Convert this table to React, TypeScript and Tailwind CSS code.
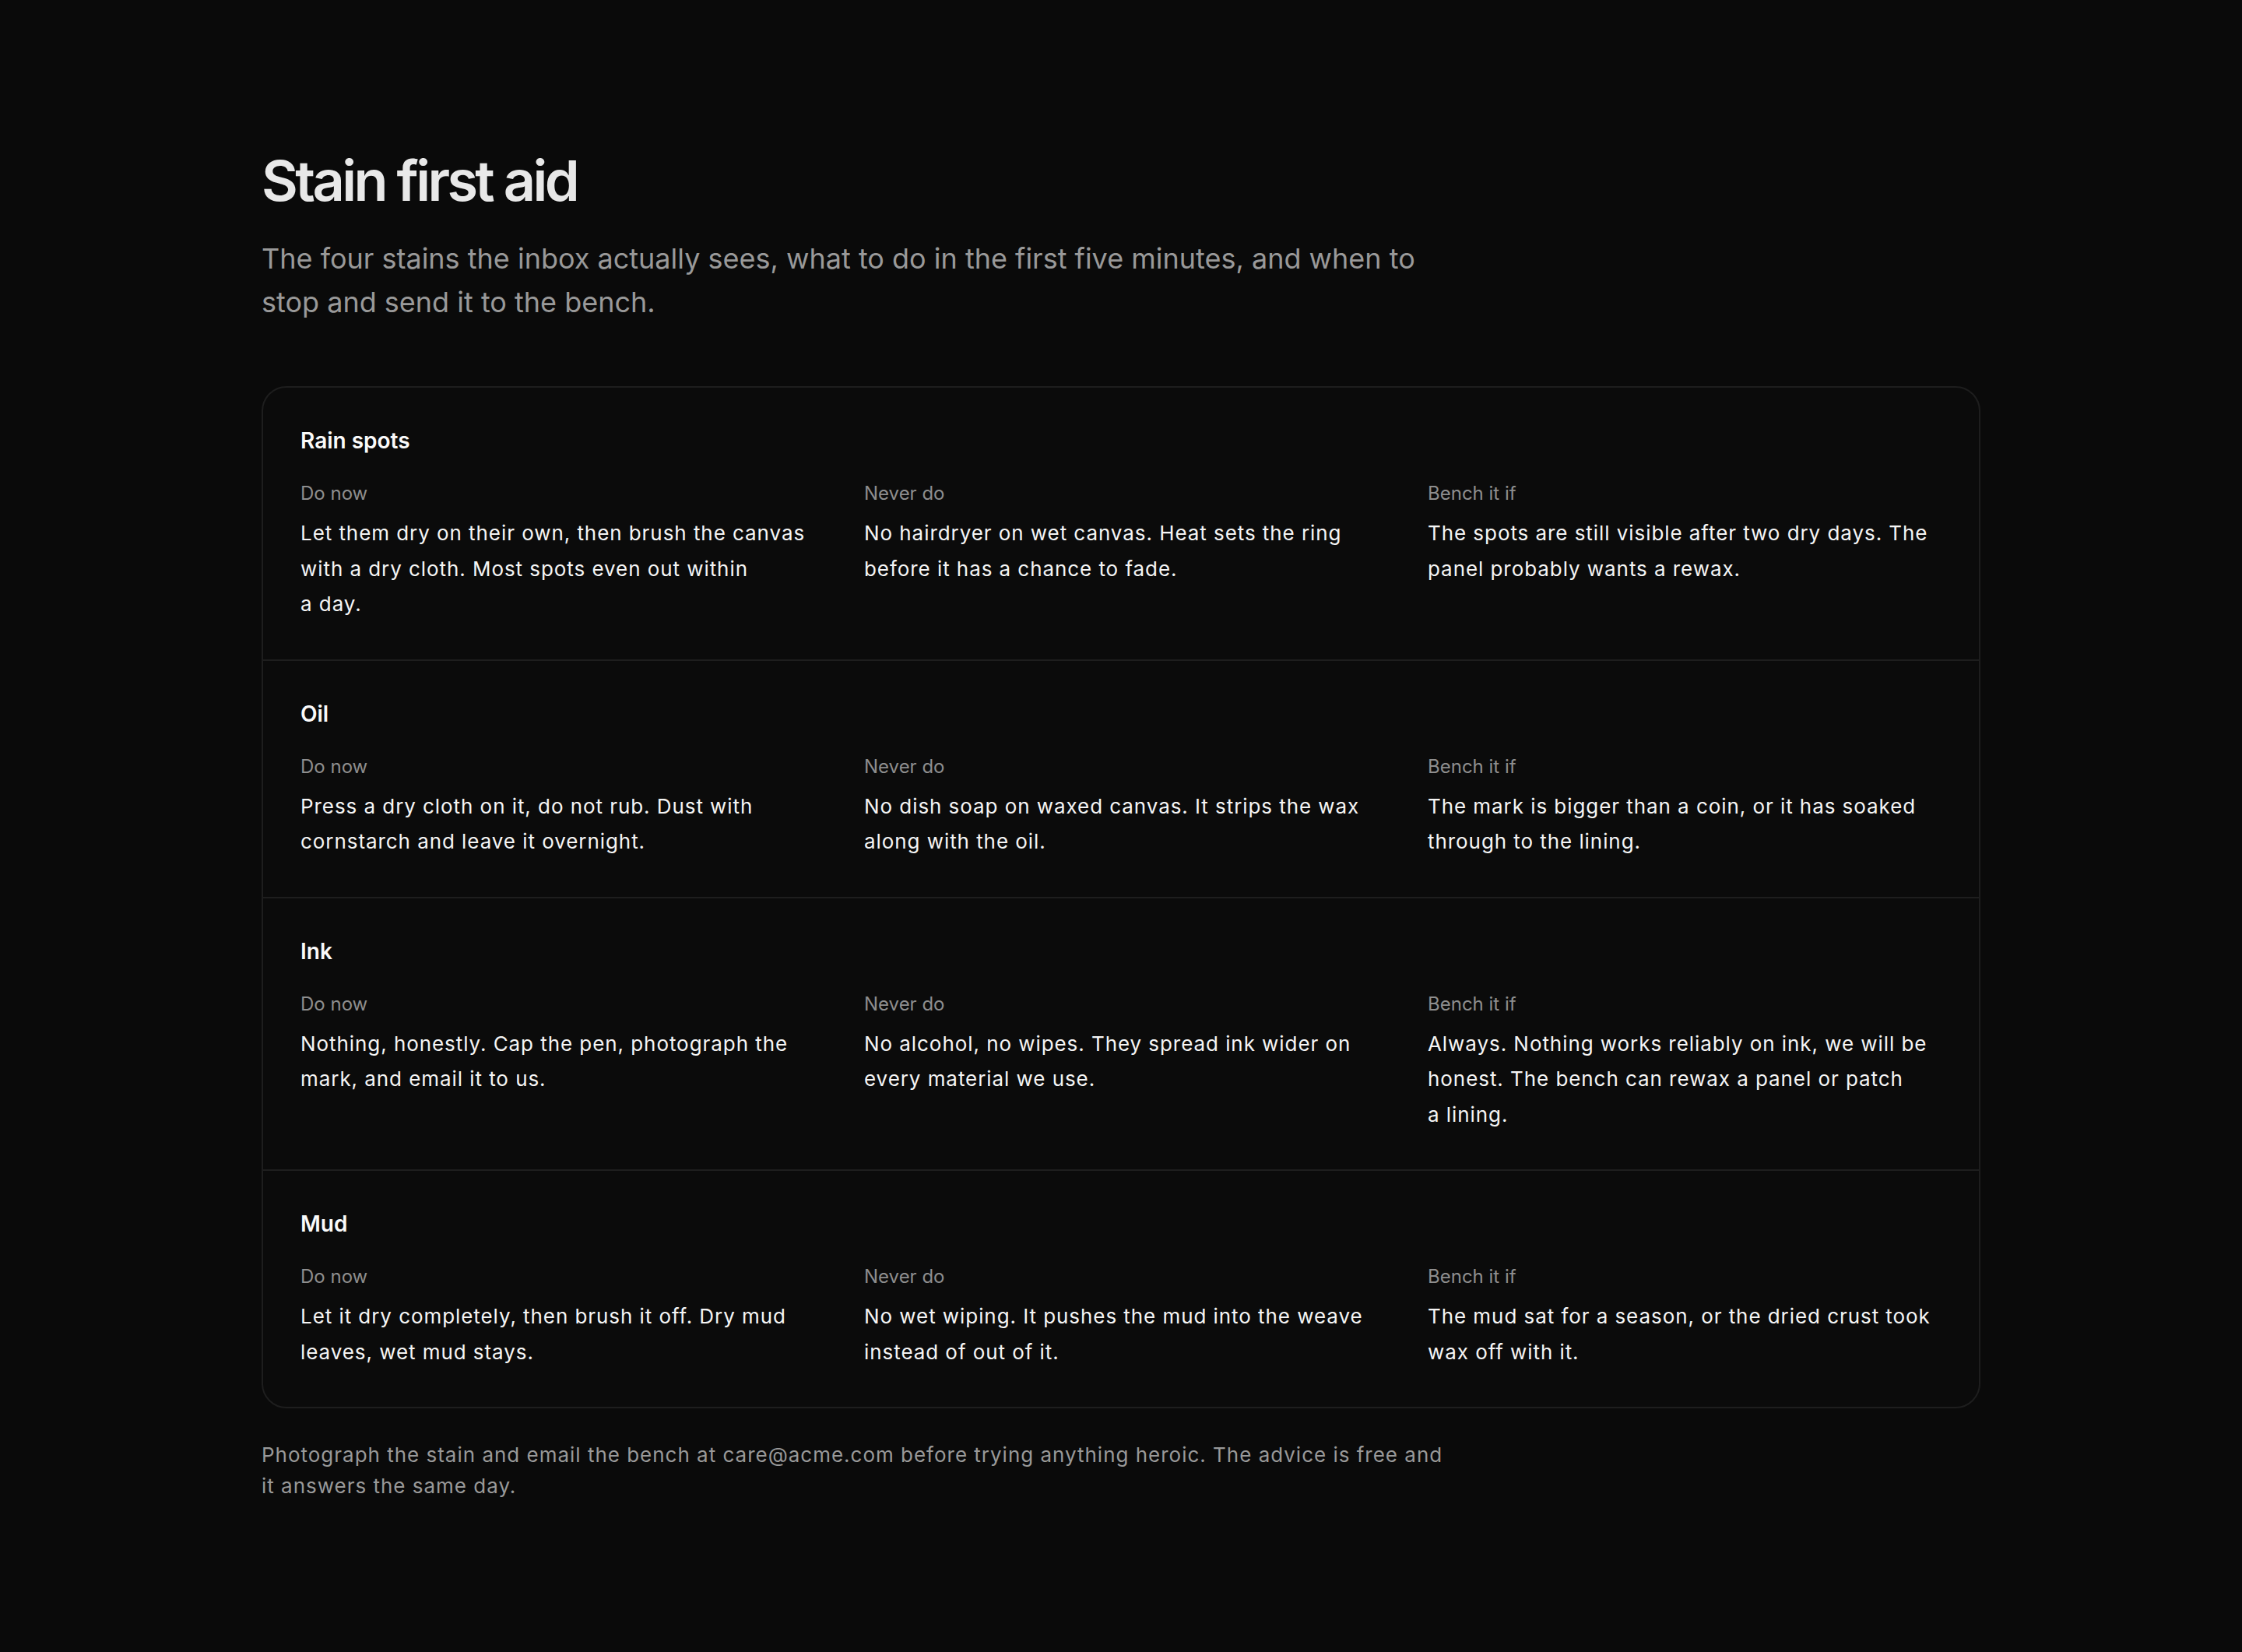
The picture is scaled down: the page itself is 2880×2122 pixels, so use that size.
import React from 'react';

type Stain = {
  name: string;
  doNow: string;
  neverDo: string;
  benchIf: string;
};

const stains: Stain[] = [
  {
    name: 'Rain spots',
    doNow: 'Let them dry on their own, then brush the canvas with a dry cloth. Most spots even out within a day.',
    neverDo: 'No hairdryer on wet canvas. Heat sets the ring before it has a chance to fade.',
    benchIf: 'The spots are still visible after two dry days. The panel probably wants a rewax.',
  },
  {
    name: 'Oil',
    doNow: 'Press a dry cloth on it, do not rub. Dust with cornstarch and leave it overnight.',
    neverDo: 'No dish soap on waxed canvas. It strips the wax along with the oil.',
    benchIf: 'The mark is bigger than a coin, or it has soaked through to the lining.',
  },
  {
    name: 'Ink',
    doNow: 'Nothing, honestly. Cap the pen, photograph the mark, and email it to us.',
    neverDo: 'No alcohol, no wipes. They spread ink wider on every material we use.',
    benchIf: 'Always. Nothing works reliably on ink, we will be honest. The bench can rewax a panel or patch a lining.',
  },
  {
    name: 'Mud',
    doNow: 'Let it dry completely, then brush it off. Dry mud leaves, wet mud stays.',
    neverDo: 'No wet wiping. It pushes the mud into the weave instead of out of it.',
    benchIf: 'The mud sat for a season, or the dried crust took wax off with it.',
  },
];

const Advice: React.FC<{ label: string; text: string }> = ({ label, text }) => (
  <div>
    <p className="text-[24px] leading-[32px] text-[#8e8e8e]">{label}</p>
    <p className="mt-[12px] text-[26px] leading-[45.5px] tracking-[0.036em] text-[#f5f5f5] text-pretty">{text}</p>
  </div>
);

export default function App() {
  return (
    <div className="min-h-screen bg-[#0a0a0a] font-['Inter',sans-serif] antialiased">
      <div className="mx-auto max-w-[2304px] px-[48px] pt-[192px] pb-[192px]">
        <h1 className="text-[72px] leading-[80px] font-semibold tracking-[-0.05em] text-[#e8e8e8]">
          Stain first aid
        </h1>
        <p className="mt-[32px] max-w-[1536px] text-[36px] leading-[56px] text-[#999999]">
          The four stains the inbox actually sees, what to do in the first five minutes, and when to stop and send it
          to the bench.
        </p>

        {/* Stain table */}
        <div className="mt-[80px] rounded-[32px] border-2 border-[#1e1e1e] bg-[#0b0b0b]">
          {stains.map((s, i) => (
            <div key={s.name} className={i > 0 ? 'border-t-2 border-[#1e1e1e] p-[48px]' : 'p-[48px]'}>
              <h2 className="text-[28px] leading-[40px] font-semibold text-[#fafafa]">{s.name}</h2>
              <div className="mt-[32px] grid grid-cols-3 gap-[64px]">
                <Advice label="Do now" text={s.doNow} />
                <Advice label="Never do" text={s.neverDo} />
                <Advice label="Bench it if" text={s.benchIf} />
              </div>
            </div>
          ))}
        </div>

        <p className="mt-[40px] max-w-[1536px] text-[26px] leading-[40px] tracking-[0.038em] text-[#999999]">
          Photograph the stain and email the bench at care@acme.com before trying anything heroic. The advice is free
          and it answers the same day.
        </p>
      </div>
    </div>
  );
}
